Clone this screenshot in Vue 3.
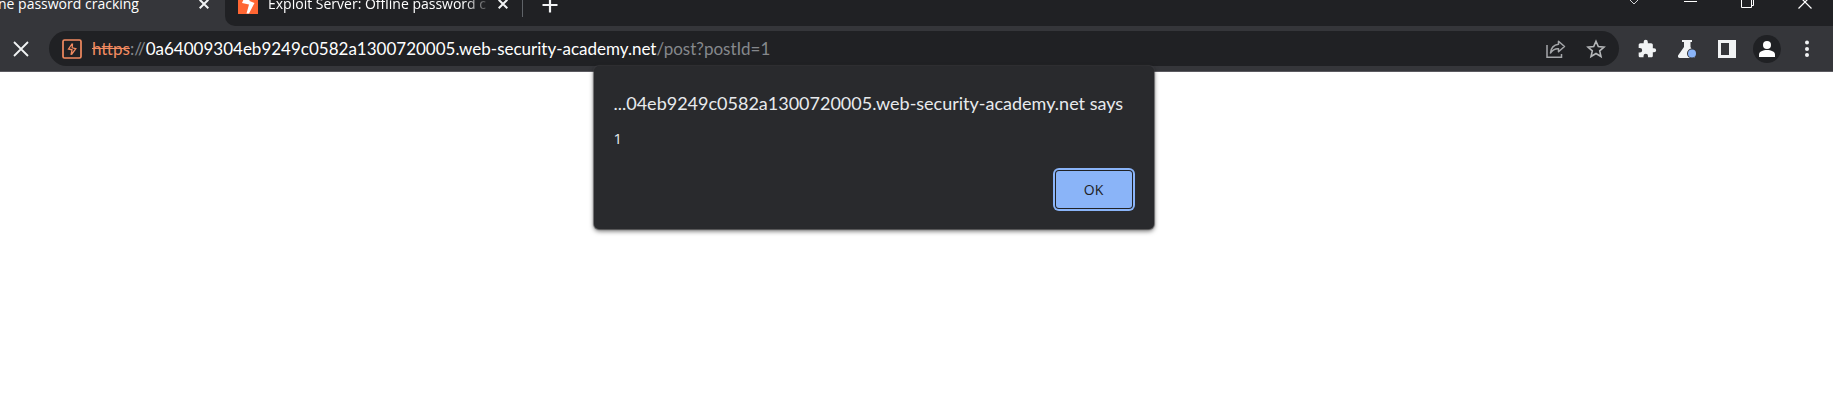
<script setup>
import { ref } from 'vue'

const url = ref({
  scheme: 'https',
  host: '0a64009304eb9249c0582a1300720005.web-security-academy.net',
  path: '/post?postId=1'
})
const dialogOpen = ref(true)
</script>

<template>
  <div class="browser">
    <header class="strip">
      <div class="tab active">
        <span class="tab-title">ne password cracking</span>
        <button class="tab-close" aria-label="Close tab">
          <svg width="10" height="10" viewBox="0 0 10 10"><path d="M.7.7l8.6 8.6M9.3.7L.7 9.3" stroke="#f1f3f4" stroke-width="2" /></svg>
        </button>
      </div>
      <div class="rest">
        <div class="tab second">
          <svg class="favicon" width="20" height="20" viewBox="0 0 20 20">
            <rect width="20" height="20" fill="#ff6633" />
            <path d="M8 0L4 9l7 1.500L8.500 19.500h2.500L16.500 9l-5-2V0z" fill="#fff" />
          </svg>
          <span class="tab-title fade">Exploit Server: Offline password cracking</span>
          <button class="tab-close" aria-label="Close tab">
            <svg width="10" height="10" viewBox="0 0 10 10"><path d="M.7.7l8.6 8.6M9.3.7L.7 9.300" stroke="#f1f3f4" stroke-width="2" /></svg>
          </button>
        </div>
        <button class="new-tab" aria-label="New tab">
          <svg width="16" height="16" viewBox="0 0 16 16"><path d="M8 .5v15M.5 8h15" stroke="#f1f3f4" stroke-width="2.200" /></svg>
        </button>
        <div class="window">
          <button aria-label="Search tabs">
            <svg width="12" height="12" viewBox="0 0 12 12"><path d="M1.500 3.500L6 8l4.500-4.500L6 -1z" fill="none" stroke="#d5d6d8" /></svg>
          </button>
          <button aria-label="Minimize">
            <svg width="14" height="14" viewBox="0 0 14 14"><path d="M0 6.500h13" stroke="#fff" /></svg>
          </button>
          <button aria-label="Restore">
            <svg width="14" height="14" viewBox="0 0 14 14"><path d="M.5 3.500h10v9H.5zM2.500 1.500h10v9h-1.500" fill="none" stroke="#fff" /></svg>
          </button>
          <button aria-label="Close window">
            <svg width="14" height="14" viewBox="0 0 14 14"><path d="M.5.5l13 13M13.500.5l-13 13" stroke="#fff" stroke-width="1.200" /></svg>
          </button>
        </div>
      </div>
    </header>

    <div class="toolbar">
      <button class="stop" aria-label="Stop loading">
        <svg width="16" height="16" viewBox="0 0 16 16"><path d="M1 1l14 14M15 1L1 15" stroke="#f1f3f4" stroke-width="1.800" /></svg>
      </button>
      <div class="omnibox">
        <button class="site" aria-label="Site information">
          <svg width="20" height="20" viewBox="0 0 20 20">
            <rect x="1" y="1" width="18" height="18" rx="1.500" fill="none" stroke="#f28b60" stroke-width="1.700" />
            <path d="M10.300 4.500L6.500 10l3.500.8-1 5M10.500 4.500l-.3 4.300 3.600.9-4.300 5.800" fill="none" stroke="#f28b60" stroke-width="1.300" />
          </svg>
        </button>
        <a class="url" href="#"><s>{{ url.scheme }}</s><span class="dim">://</span>{{ url.host }}<span class="dim">{{ url.path }}</span></a>
        <button class="tool" aria-label="Share">
          <svg width="20" height="20" viewBox="0 0 20 20" fill="none" stroke="#a5a7aa" stroke-width="1.500">
            <path d="M1 6v12.200h14.500V15" />
            <path d="M12.500 2.200l6 5.300-6 5.300V9.800C9 9.500 6.500 11 4.500 14 5 9 8 5.800 12.500 5.300z" stroke-linejoin="round" />
          </svg>
        </button>
        <button class="tool" aria-label="Bookmark this page">
          <svg width="20" height="20" viewBox="0 0 20 20"><path d="M10 2.300l2.300 5.300 5.700.5-4.300 3.800 1.300 5.600-5-3-5 3 1.300-5.600L2 8.100l5.700-.5z" fill="none" stroke="#b4b6b8" stroke-width="1.600" /></svg>
        </button>
      </div>
      <nav class="actions" aria-label="Browser actions">
        <button class="tool" aria-label="Extensions">
          <svg width="20" height="20" viewBox="0 0 24 24"><path fill="#f1f3f4" d="M20.500 11H19V7c0-1.100-.9-2-2-2h-4V3.500a2.500 2.500 0 0 0-5 0V5H4c-1.100 0-2 .9-2 2v3.800h1.500a2.700 2.700 0 0 1 0 5.400H2V20c0 1.100.9 2 2 2h3.800v-1.500a2.700 2.700 0 0 1 5.400 0V22H17c1.100 0 2-.9 2-2v-4h1.500a2.500 2.500 0 0 0 0-5z" /></svg>
        </button>
        <button class="tool" aria-label="Experiments">
          <svg width="20" height="20" viewBox="0 0 20 20">
            <path d="M5 1h10v2h-1.500v5L18 16.500q.7 2.500-1.500 2.500H2.500q-2.200-.5-1.500-2.500L7 8V3H5z" fill="#f1f3f4" />
            <circle cx="15" cy="14.500" r="5" fill="#35363a" />
            <circle cx="15" cy="14.500" r="4" fill="#8ab4f8" />
          </svg>
        </button>
        <button class="tool" aria-label="Side panel">
          <svg width="18" height="18" viewBox="0 0 18 18"><path d="M0 0h18v18H0zM3 3v12h8V3z" fill="#f1f3f4" fill-rule="evenodd" /></svg>
        </button>
        <button class="tool" aria-label="Profile">
          <svg width="28" height="28" viewBox="0 0 28 28">
            <circle cx="14" cy="14" r="14" fill="#202124" />
            <circle cx="14" cy="10" r="4" fill="#fff" />
            <path d="M6 22v-2.500c0-6 16-6 16 0V22z" fill="#fff" />
          </svg>
        </button>
        <button class="tool" aria-label="Menu">
          <svg width="4" height="18" viewBox="0 0 4 18" fill="#f1f3f4"><circle cx="2" cy="2.500" r="2" /><circle cx="2" cy="9" r="2" /><circle cx="2" cy="15" r="2" /></svg>
        </button>
      </nav>
    </div>

    <main class="page">
      <section v-if="dialogOpen" class="dialog" role="alertdialog" aria-labelledby="origin" aria-describedby="message">
        <h1 id="origin">...04eb9249c0582a1300720005.web-security-academy.net says</h1>
        <p id="message">1</p>
        <button class="ok" @click="dialogOpen = false">OK</button>
      </section>
    </main>
  </div>
</template>

<style>
body {
  margin: 0;
  background: #fff;
}
</style>

<style scoped>
.browser {
  display: flex;
  flex-direction: column;
  min-height: 100vh;
  font-family: "Open Sans", "Noto Sans", sans-serif;
  color: #fff;
}

button {
  display: flex;
  align-items: center;
  justify-content: center;
  flex: none;
  padding: 0;
  border: 0;
  background: none;
  font: inherit;
}

svg {
  display: block;
  flex: none;
}

.strip {
  display: flex;
  height: 26px;
  overflow: hidden;
  background: #35363a;
}

.rest {
  display: flex;
  align-items: flex-end;
  flex: 1;
  min-width: 0;
  border-bottom-left-radius: 10px;
  background: #202124;
}

.tab {
  display: flex;
  align-items: center;
  align-self: flex-end;
  flex: none;
  box-sizing: border-box;
  height: 44px;
  font-size: 14px;
  line-height: 20px;
  white-space: nowrap;
}

.active {
  justify-content: space-between;
  width: 225px;
  padding-right: 16px;
}

.active .tab-title {
  margin-left: -2px;
}

.second {
  position: relative;
  width: 298px;
  padding: 0 15px 0 13px;
}

.second::after {
  content: "";
  position: absolute;
  right: 0;
  bottom: 9px;
  width: 1px;
  height: 26px;
  background: #5f6368;
}

.tab-title {
  overflow: hidden;
}

.fade {
  flex: 1;
  margin: 0 12px 0 10px;
  mask-image: linear-gradient(to right, #000 196px, transparent 224px);
}

.new-tab {
  width: 54px;
  height: 42px;
}

.window {
  display: flex;
  margin-left: auto;
}

.window button {
  width: 57px;
  height: 48px;
}

.toolbar {
  display: flex;
  align-items: center;
  height: 45px;
  border-bottom: 1px solid #5b5a60;
  background: #35363a;
}

.stop {
  width: 42px;
  height: 36px;
  margin-right: 7px;
}

.omnibox {
  display: flex;
  align-items: center;
  flex: 1;
  min-width: 0;
  height: 35px;
  padding: 0 3px 0 13px;
  border-radius: 18px;
  background: #202124;
}

.site {
  margin-right: 10px;
}

.url {
  flex: 1;
  min-width: 0;
  overflow: hidden;
  color: #fff;
  font-family: Lato, sans-serif;
  font-size: 17px;
  line-height: 24px;
  text-decoration: none;
  white-space: nowrap;
}

.url s {
  color: #f28b60;
}

.dim {
  color: #85888c;
}

.tool {
  width: 40px;
  height: 35px;
}

.actions {
  display: flex;
  padding: 0 6px 0 8px;
}

.page {
  position: relative;
  flex: 1;
}

.dialog {
  position: absolute;
  top: -6px;
  left: calc(50% - 323px);
  display: flex;
  flex-direction: column;
  box-sizing: border-box;
  width: 560px;
  padding: 24px 22px 21px 20px;
  border-radius: 5px;
  background: #292a2d;
  box-shadow: 0 2px 5px rgba(0, 0, 0, 0.6), 0 0 1px 1px rgba(70, 70, 74, 0.6);
  color: #e8eaed;
}

.dialog h1 {
  margin: 0 0 12px;
  font-family: Lato, sans-serif;
  font-size: 18px;
  font-weight: 400;
  line-height: 26px;
  white-space: nowrap;
}

.dialog p {
  margin: 0 0 23px;
  font-size: 15px;
  line-height: 20px;
}

.ok {
  align-self: flex-end;
  width: 76px;
  height: 37px;
  border-radius: 3px;
  background: #8ab4f8;
  box-shadow: 0 0 0 1px #202124, 0 0 0 3px #8ab4f8;
  color: #202124;
  font-size: 14px;
}
</style>
